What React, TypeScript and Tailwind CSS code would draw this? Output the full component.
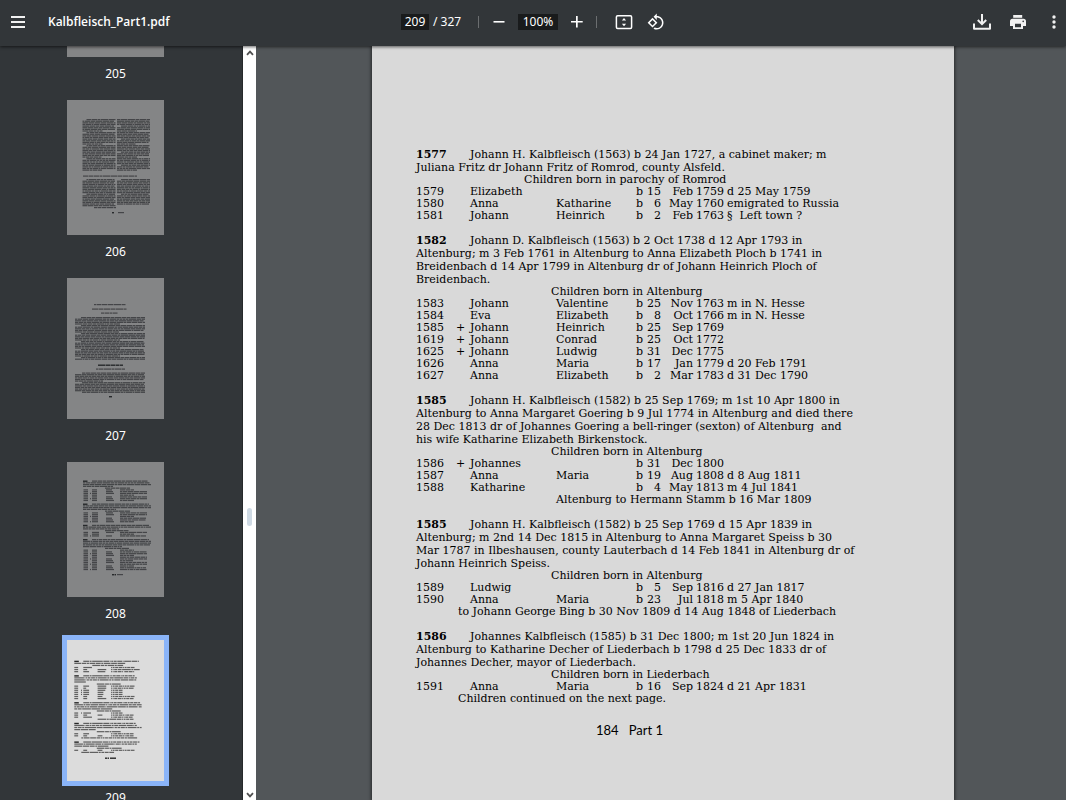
import React from "react";

type Child = {
  id: string;
  plus?: boolean;
  first: string;
  second?: string;
  day: string;
  month: string;
  year: string;
  event?: string;
};

type Entry = {
  id: string;
  lines: string[];
  place: string;
  wide?: boolean;
  children: Child[];
  note?: string;
  noteStyle?: string;
};

const entries: Entry[] = [
  {
    id: "1577",
    lines: [
      "Johann H. Kalbfleisch (1563) b 24 Jan 1727, a cabinet maker; m",
      "Juliana Fritz dr Johann Fritz of Romrod, county Alsfeld.",
    ],
    place: "Children born in parochy of Romrod",
    wide: true,
    children: [
      { id: "1579", first: "Elizabeth", day: "15", month: "Feb", year: "1759", event: "d 25 May 1759" },
      { id: "1580", first: "Anna", second: "Katharine", day: "6", month: "May", year: "1760", event: "emigrated to Russia" },
      { id: "1581", first: "Johann", second: "Heinrich", day: "2", month: "Feb", year: "1763", event: "§  Left town ?" },
    ],
  },
  {
    id: "1582",
    lines: [
      "Johann D. Kalbfleisch (1563) b 2 Oct 1738 d 12 Apr 1793 in",
      "Altenburg; m 3 Feb 1761 in Altenburg to Anna Elizabeth Ploch b 1741 in",
      "Breidenbach d 14 Apr 1799 in Altenburg dr of Johann Heinrich Ploch of",
      "Breidenbach.",
    ],
    place: "Children born in Altenburg",
    children: [
      { id: "1583", first: "Johann", second: "Valentine", day: "25", month: "Nov", year: "1763", event: "m in N. Hesse" },
      { id: "1584", first: "Eva", second: "Elizabeth", day: "8", month: "Oct", year: "1766", event: "m in N. Hesse" },
      { id: "1585", plus: true, first: "Johann", second: "Heinrich", day: "25", month: "Sep", year: "1769" },
      { id: "1619", plus: true, first: "Johann", second: "Conrad", day: "25", month: "Oct", year: "1772" },
      { id: "1625", plus: true, first: "Johann", second: "Ludwig", day: "31", month: "Dec", year: "1775" },
      { id: "1626", first: "Anna", second: "Maria", day: "17", month: "Jan", year: "1779", event: "d 20 Feb 1791" },
      { id: "1627", first: "Anna", second: "Elizabeth", day: "2", month: "Mar", year: "1783", event: "d 31 Dec 1790" },
    ],
  },
  {
    id: "1585",
    lines: [
      "Johann H. Kalbfleisch (1582) b 25 Sep 1769; m 1st 10 Apr 1800 in",
      "Altenburg to Anna Margaret Goering b 9 Jul 1774 in Altenburg and died there",
      "28 Dec 1813 dr of Johannes Goering a bell-ringer (sexton) of Altenburg  and",
      "his wife Katharine Elizabeth Birkenstock.",
    ],
    place: "Children born in Altenburg",
    children: [
      { id: "1586", plus: true, first: "Johannes", day: "31", month: "Dec", year: "1800" },
      { id: "1587", first: "Anna", second: "Maria", day: "19", month: "Aug", year: "1808", event: "d 8 Aug 1811" },
      { id: "1588", first: "Katharine", day: "4", month: "May", year: "1813", event: "m 4 Jul 1841" },
    ],
    note: "Altenburg to Hermann Stamm b 16 Mar 1809",
    noteStyle: "pl-[140px]",
  },
  {
    id: "1585",
    lines: [
      "Johann H. Kalbfleisch (1582) b 25 Sep 1769 d 15 Apr 1839 in",
      "Altenburg; m 2nd 14 Dec 1815 in Altenburg to Anna Margaret Speiss b 30",
      "Mar 1787 in Ilbeshausen, county Lauterbach d 14 Feb 1841 in Altenburg dr of",
      "Johann Heinrich Speiss.",
    ],
    place: "Children born in Altenburg",
    children: [
      { id: "1589", first: "Ludwig", day: "5", month: "Sep", year: "1816", event: "d 27 Jan 1817" },
      { id: "1590", first: "Anna", second: "Maria", day: "23", month: "Jul", year: "1818", event: "m 5 Apr 1840" },
    ],
    note: "to Johann George Bing b 30 Nov 1809 d 14 Aug 1848 of Liederbach",
    noteStyle: "pl-[42px]",
  },
  {
    id: "1586",
    lines: [
      "Johannes Kalbfleisch (1585) b 31 Dec 1800; m 1st 20 Jun 1824 in",
      "Altenburg to Katharine Decher of Liederbach b 1798 d 25 Dec 1833 dr of",
      "Johannes Decher, mayor of Liederbach.",
    ],
    place: "Children born in Liederbach",
    children: [
      { id: "1591", first: "Anna", second: "Maria", day: "16", month: "Sep", year: "1824", event: "d 21 Apr 1831" },
    ],
    note: "Children continued on the next page.",
    noteStyle: "pl-[42px]",
  },
];

function EntryBlock({ entry }: { entry: Entry }) {
  return (
    <section className="whitespace-pre">
      <p className="leading-[13px]">
        {entry.lines.map((line, i) => (
          <span key={i} className="block">
            {i === 0 && <b className="inline-block w-[54px] font-bold">{entry.id}</b>}
            {line}
          </span>
        ))}
      </p>
      <table className="w-[420px] table-fixed border-collapse leading-[12px]">
        <caption className={entry.wide ? "pl-[108px] text-left" : "pl-[135px] text-left"}>{entry.place}</caption>
        <colgroup>
          <col className="w-[40px]" />
          <col className="w-[14px]" />
          <col className="w-[86px]" />
          <col className="w-[80px]" />
          <col className="w-[8px]" />
          <col className="w-[17px]" />
          <col className="w-[32px]" />
          <col className="w-[34px]" />
          <col />
        </colgroup>
        <tbody>
          {entry.children.map((c) => (
            <tr key={c.id}>
              <td className="p-0">{c.id}</td>
              <td className="p-0">{c.plus ? "+" : ""}</td>
              <td className="p-0">{c.first}</td>
              <td className="p-0">{c.second}</td>
              <td className="p-0">b</td>
              <td className="p-0 text-right">{c.day}</td>
              <td className="p-0 text-right">{c.month}</td>
              <td className="p-0 pl-[3px]">{c.year}</td>
              <td className="p-0">{c.event}</td>
            </tr>
          ))}
        </tbody>
      </table>
      {entry.note && <p className={`leading-[12px] ${entry.noteStyle}`}>{entry.note}</p>}
    </section>
  );
}

type Run = { x: number; y: number; w: number; bold?: boolean };

/* Breaks a span of text into word-length runs for the miniature pages. */
function words(x: number, y: number, width: number, seed: number, bold = false): Run[] {
  const out: Run[] = [];
  let pos = x;
  let s = seed * 7 + 3;
  while (pos < x + width - 1) {
    s = (s * 37 + 11) % 101;
    const w = Math.min(2 + (s % 6), x + width - pos);
    out.push({ x: pos, y, w, bold });
    pos += w + 0.5;
  }
  return out;
}

/* One run per word of a real line, at a sixth of its printed size. */
function lineRuns(text: string, x: number, y: number): Run[] {
  const out: Run[] = [];
  let pos = x;
  text.split(" ").forEach((word) => {
    const w = word.length * 0.96;
    if (word) out.push({ x: pos, y, w });
    pos += w + 0.6;
  });
  return out;
}

function columnsPage(): Run[] {
  const out: Run[] = [];
  [15.5, 50].forEach((x, c) => {
    for (let i = 0; i < 32; i++) {
      const para = (i + c * 4) % 8 === 0;
      out.push(...words(para ? x + 4 : x, 19 + i * 1.63, para ? 29 : i % 8 === 7 ? 20 : 33, i + c * 40));
    }
    for (let i = 0; i < 17 - c; i++) {
      out.push(...words(i % 9 === 0 ? x + 4 : x, 79 + i * 1.63, i % 9 === 0 ? 29 : 33, i + 90 + c * 20));
    }
  });
  out.push(...words(16, 75.5, 54, 5), ...words(27, 107, 22, 8), ...words(45, 112, 3, 1, true), ...words(51, 112, 6, 2));
  return out;
}

function articlePage(): Run[] {
  const out: Run[] = [];
  out.push(...words(27, 26, 32, 1), ...words(25, 30.5, 35, 2), ...words(34, 34.5, 18, 3));
  for (let i = 0; i < 27; i++) {
    const start = i % 5 === 0;
    out.push(...words(start ? 14 : 8, 39 + i * 1.6, start ? 64 : i % 5 === 4 ? 45 : 70, i));
  }
  out.push(...words(31, 86.5, 25, 4, true), ...words(29, 90.5, 29, 6));
  for (let i = 0; i < 13; i++) {
    const start = i % 6 === 0;
    out.push(...words(start ? 15 : 8, 94.5 + i * 1.6, start ? 63 : i === 12 ? 17 : i === 5 ? 28 : 70, i + 50));
  }
  out.push(...words(42, 118, 3, 9, true));
  return out;
}

function registerPage(blocks: [number, number][], left: number, top: number, step: number, gap: number): Run[] {
  const out: Run[] = [];
  let y = top;
  blocks.forEach(([prose, rows], b) => {
    for (let i = 0; i < prose; i++) {
      if (i === 0) out.push({ x: left, y, w: 4.5, bold: true });
      out.push(...words(i === 0 ? left + 9 : left, y, i === 0 ? 57 : i === prose - 1 ? 30 + b * 3 : 68, b * 10 + i));
      y += step;
    }
    out.push(...words(left + 22, y, 25, b));
    y += step;
    for (let i = 0; i < rows; i++) {
      out.push({ x: left + 0.5, y, w: 4.5 });
      if (i % 3 === 2) out.push({ x: left + 7, y, w: 1 });
      out.push({ x: left + 9, y, w: 5 + ((i * 3 + b) % 3) });
      if ((i + b) % 4 !== 3) out.push({ x: left + 23, y, w: 6 + ((i + b) % 4) });
      out.push(...words(left + 37, y, (i + b) % 3 ? 27 : 14, i + b * 5));
      y += step;
    }
    y += gap;
  });
  return out;
}

function currentPage(): Run[] {
  const out: Run[] = [];
  const left = 7.3;
  const step = 2.07;
  let y = 20.7;
  entries.forEach((entry) => {
    out.push({ x: left, y, w: 4.5, bold: true });
    entry.lines.forEach((line, i) => {
      out.push(...lineRuns(line, i === 0 ? left + 9 : left, y));
      y += step;
    });
    out.push(...lineRuns(entry.place, entry.wide ? left + 18 : left + 22.5, y));
    y += step;
    entry.children.forEach((c) => {
      out.push(...lineRuns(c.id, left, y));
      if (c.plus) out.push({ x: left + 6.7, y, w: 1 });
      out.push(...lineRuns(c.first, left + 9, y));
      out.push(...lineRuns(c.second ?? "", left + 23.3, y));
      out.push(...lineRuns(`b ${c.day} ${c.month} ${c.year} ${c.event ?? ""}`, left + 36.8, y));
      y += step;
    });
    if (entry.note) {
      out.push(...lineRuns(entry.note, entry.noteStyle === "pl-[140px]" ? left + 23.3 : left + 7, y));
      y += step;
    }
    y += step;
  });
  out.push(...words(38, 117.5, 4, 1, true), ...words(43, 117.5, 6, 2, true));
  return out;
}

const thumbnails = [
  { page: 205, height: 135, runs: [] as Run[] },
  { page: 206, height: 135, runs: columnsPage() },
  { page: 207, height: 141, runs: articlePage() },
  {
    page: 208,
    height: 135,
    runs: [
      ...registerPage([[4, 7], [4, 6], [3, 3], [5, 12]], 16, 18.5, 1.76, 1.9),
      ...words(45, 112, 4, 1, true),
      ...words(50, 112, 6, 2),
    ],
  },
  { page: 209, height: 141, runs: currentPage() },
];

function Thumbnail({ page, height, runs }: { page: number; height: number; runs: Run[] }) {
  const selected = page === 209;
  return (
    <li className="flex flex-col items-center gap-[9px]">
      <button
        aria-label={`Page ${page}`}
        className={selected ? "bg-[#dcdcdc] ring-[5px] ring-[#8ab4f8]" : "bg-[#848586]"}
      >
        <svg width="97" height={height} viewBox={`0 0 97 ${height}`} className="block">
          {runs.map((r, i) => (
            <rect
              key={i}
              x={r.x}
              y={r.y}
              width={r.w}
              height={r.bold ? 1.4 : 1.2}
              fill={selected ? "#1c1c1c" : "#222426"}
              opacity={r.bold ? 0.95 : 0.65}
            />
          ))}
        </svg>
      </button>
      <span className="h-4 text-[12px] leading-4 text-white">{page}</span>
    </li>
  );
}

function Separator() {
  return <span className="h-3 w-px bg-[#6b6e70]" />;
}

function Toolbar() {
  return (
    <header className="z-10 grid h-[46px] shrink-0 grid-cols-[1fr_auto_1fr] items-center bg-[#323639] pb-0.5 text-[#f1f1f1] shadow-[0_1px_3px_rgba(0,0,0,0.6)]">
      <div className="flex items-center gap-5 pl-2">
        <button aria-label="Menu">
          <svg width="20" height="20" viewBox="0 0 20 20" fill="currentColor">
            <path d="M3 4h14v2H3zM3 9h14v2H3zM3 14h14v2H3z" />
          </svg>
        </button>
        <h1 className="font-['Open_Sans',sans-serif] text-[12px] font-semibold text-white">Kalbfleisch_Part1.pdf</h1>
      </div>

      <div className="flex items-center text-[12px] text-white">
        <input
          aria-label="Page number"
          defaultValue="209"
          className="h-4 w-7 bg-[#191b1c] text-center leading-4 outline-none"
        />
        <span className="ml-1 w-[45px]">/ 327</span>
        <Separator />
        <button aria-label="Zoom out" className="ml-3">
          <svg width="16" height="16" viewBox="0 0 16 16" fill="currentColor">
            <path d="M2.5 7h11v1.6h-11z" />
          </svg>
        </button>
        <input
          aria-label="Zoom level"
          defaultValue="100%"
          className="ml-[11px] h-4 w-10 bg-[#191b1c] text-center leading-4 outline-none"
        />
        <button aria-label="Zoom in" className="mx-[11px]">
          <svg width="16" height="16" viewBox="0 0 16 16" fill="currentColor">
            <path d="M2 7h5V2h1.7v5h5v1.6h-5v5H7v-5H2z" />
          </svg>
        </button>
        <Separator />
        <button aria-label="Fit to page" className="ml-[18px]">
          <svg width="18" height="18" viewBox="0 0 18 18">
            <rect x="1.4" y="2.8" width="15.2" height="12.6" rx="1.2" fill="none" stroke="currentColor" strokeWidth="1.5" />
            <path d="M9 4.9l2.1 2.6H6.9zM9 13.3l2.1-2.6H6.9z" fill="currentColor" />
          </svg>
        </button>
        <button aria-label="Rotate counterclockwise" className="ml-[14px]">
          <svg width="18" height="18" viewBox="0 0 24 24" fill="currentColor">
            <path d="M7.34 6.41L.86 12.9l6.49 6.48 6.49-6.48-6.5-6.49zM3.69 12.9l3.66-3.66L11 12.9l-3.66 3.66-3.65-3.66zm15.67-6.26C17.61 4.88 15.3 4 13 4V.76L8.76 5 13 9.24V6c1.79 0 3.58.68 4.95 2.05 2.73 2.73 2.73 7.17 0 9.9C16.58 19.32 14.79 20 13 20c-.97 0-1.94-.21-2.84-.61l-1.49 1.49C10.02 21.62 11.51 22 13 22c2.3 0 4.61-.88 6.36-2.64 3.52-3.51 3.52-9.21 0-12.72z" />
          </svg>
        </button>
      </div>

      <div className="flex items-center justify-end gap-4 pr-0.5">
        <button aria-label="Download">
          <svg width="20" height="20" viewBox="0 0 20 20" fill="none" stroke="currentColor" strokeWidth="2">
            <path d="M2 11.5v5.3h16v-5.3" strokeLinejoin="round" />
            <path d="M10 2v9.5M5.8 8L10 12.2 14.2 8" />
          </svg>
        </button>
        <button aria-label="Print">
          <svg width="20" height="20" viewBox="0 0 20 20" fill="currentColor">
            <path d="M5.2 3h9v2.8h-9z" />
            <path
              fillRule="evenodd"
              d="M4.6 6.8h10.8a2.6 2.6 0 0 1 2.6 2.6V14h-3v3H5v-3H2V9.4a2.6 2.6 0 0 1 2.6-2.6zM7 11.7v3.6h6v-3.6zM15.2 8.6a.8.8 0 1 0 0 1.6.8.8 0 0 0 0-1.6z"
            />
          </svg>
        </button>
        <button aria-label="More actions">
          <svg width="20" height="20" viewBox="0 0 20 20" fill="currentColor">
            <circle cx="10" cy="5" r="1.7" />
            <circle cx="10" cy="10" r="1.7" />
            <circle cx="10" cy="15" r="1.7" />
          </svg>
        </button>
      </div>
    </header>
  );
}

function Sidebar() {
  return (
    <aside className="flex w-64 shrink-0 overflow-hidden bg-[#323639]">
      <nav aria-label="Thumbnails" className="min-w-0 flex-1 overflow-hidden border-r border-[#26292b] pr-[11px]">
        <ul className="-mt-[124px] flex flex-col gap-[18px]">
          {thumbnails.map((t) => (
            <Thumbnail key={t.page} {...t} />
          ))}
        </ul>
      </nav>
      <div className="flex w-[13px] flex-col items-center bg-white pt-1 pb-0.5 text-[#505050]">
        <svg width="8" height="6" viewBox="0 0 8 6" fill="none" stroke="currentColor" strokeWidth="1.8">
          <path d="M1 4.8L4 1.6l3 3.2" />
        </svg>
        <div className="grow-[63]" />
        <div className="h-[18px] w-[5px] rounded-full bg-[#cfdae4]" />
        <div className="grow-[37]" />
        <svg width="8" height="6" viewBox="0 0 8 6" fill="none" stroke="currentColor" strokeWidth="1.8">
          <path d="M1 1.2l3 3.2 3-3.2" />
        </svg>
      </div>
    </aside>
  );
}

export default function App() {
  return (
    <div className="flex h-screen flex-col overflow-hidden bg-[#525659] font-['Noto_Sans','Open_Sans',sans-serif]">
      <Toolbar />
      <div className="flex min-h-0 flex-1">
        <Sidebar />
        <main className="flex min-w-0 flex-1 justify-center overflow-hidden pl-1">
          <article className="flex w-[582px] shrink-0 flex-col bg-[#d9d9d9] pt-[102px] pl-11 text-black shadow-[0_0_3px_1px_rgba(0,0,0,0.5)]">
            <div className="flex flex-col gap-3 font-['DejaVu_Serif',serif] text-[11px]">
              {entries.map((entry, i) => (
                <EntryBlock key={i} entry={entry} />
              ))}
            </div>
            <footer className="flex gap-2.5 pt-[15px] pl-[180px] font-['Lato',sans-serif] text-[13px] leading-5">
              <span>184</span>
              <span>Part 1</span>
            </footer>
          </article>
        </main>
      </div>
    </div>
  );
}
